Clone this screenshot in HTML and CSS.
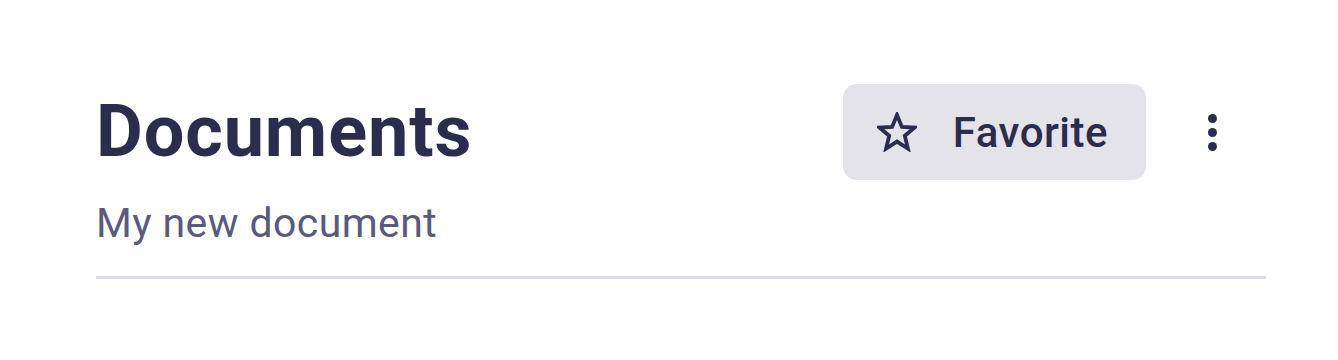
FILE: index.html
```html
<!DOCTYPE html>
<html lang="en">
<head>
    <meta charset="UTF-8">
    <meta name="viewport" content="width=device-width, initial-scale=1.0">
    <title>Documents</title>
    <link rel="stylesheet" href="styles.css">
</head>
<body>
    <div class="page">
        <div class="header">
            <div class="titles">
                <h1 class="title">Documents</h1>
                <p class="subtitle">My new document</p>
            </div>
            <div class="actions">
                <button class="fav-button">
                    <svg class="star" width="40" height="40" viewBox="0 0 40 40">
                        <polygon points="20,3 24.9,14.9 37.5,15.6 27.8,23.8 30.9,36.6 20,29.6 9.1,36.6 12.2,23.8 2.5,15.6 15.1,14.9" fill="none" stroke="currentColor" stroke-width="3.8" stroke-linejoin="miter"/>
                    </svg>
                    <span>Favorite</span>
                </button>
                <button class="more-button" aria-label="More">
                    <span class="dot"></span>
                    <span class="dot"></span>
                    <span class="dot"></span>
                </button>
            </div>
        </div>
        <div class="divider"></div>
    </div>
</body>
</html>
```

FILE: styles.css
```css
body, html {
    margin: 0;
    padding: 0;
    background: #ffffff;
    font-family: Roboto, "Noto Sans", sans-serif;
}
.page {
    padding: 84px 72px 0 96px;
}
.header {
    display: flex;
    justify-content: space-between;
    align-items: flex-start;
}
.title {
    margin: 0;
    font-size: 72px;
    line-height: 96px;
    font-weight: 700;
    letter-spacing: 0.9px;
    color: #2c2c4e;
}
.subtitle {
    margin: 19px 0 0;
    font-size: 41px;
    line-height: 48px;
    letter-spacing: 0.4px;
    color: #5a5a7d;
}
.actions {
    display: flex;
    align-items: center;
    gap: 42px;
    padding-right: 30px;
}
.fav-button {
    display: flex;
    align-items: center;
    gap: 36px;
    height: 96px;
    padding: 0 38px 0 34px;
    border: none;
    border-radius: 14px;
    background: #e3e3e9;
    color: #2c2c4e;
    font-family: Roboto, "Noto Sans", sans-serif;
    font-size: 42px;
    font-weight: 500;
    letter-spacing: 0.5px;
}
.star {
    display: block;
}
.more-button {
    display: flex;
    flex-direction: column;
    align-items: center;
    gap: 5px;
    width: 48px;
    padding: 0;
    border: none;
    background: none;
}
.dot {
    width: 9px;
    height: 9px;
    border-radius: 50%;
    background: #2c2c4e;
}
.divider {
    margin-top: 29px;
    height: 3px;
    background: #dddce6;
}
```
